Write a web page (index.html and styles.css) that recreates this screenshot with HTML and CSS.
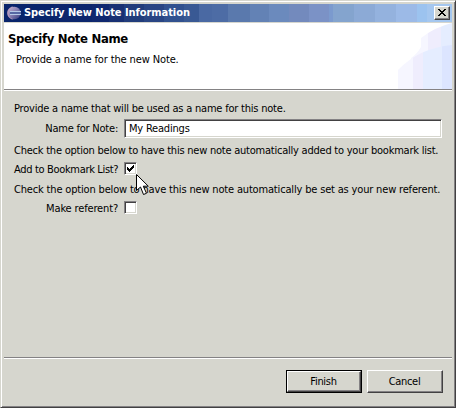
FILE: index.html
```html
<!DOCTYPE html>
<html lang="en">
<head>
<meta charset="utf-8">
<title>Specify New Note Information</title>
<link rel="stylesheet" href="styles.css">
</head>
<body>
<div class="window">
  <header class="titlebar">
    <svg class="logo" width="16" height="16" viewBox="0 0 16 16">
      <defs><linearGradient id="orb" x1="0" y1="0" x2="1" y2="1"><stop offset="0" stop-color="#c5b2ce"/><stop offset=".45" stop-color="#8982b4"/><stop offset="1" stop-color="#30377c"/></linearGradient></defs>
      <path d="M6 1.5C-.5 4 -.5 12 6 14.5L8 14C3 11 3 5 8 2Z" fill="#b99abb"/>
      <circle cx="8.5" cy="8" r="6.2" fill="url(#orb)"/>
      <path d="M4 6.5H15M4 9.5H15" stroke="#b5c8e6"/>
      <path d="M4 7.5H15M4 8.5H15" stroke="#5668a4"/>
    </svg>
    <span class="caption">Specify New Note Information</span>
    <button class="close" aria-label="Close"><svg width="8" height="7" viewBox="0 0 8 7" shape-rendering="crispEdges"><path d="M0 0h2v1h1v1h2V1h1V0h2v1H7v1H6v1H5v1h1v1h1v1h1v1H6V6H5V5H3v1H2v1H0V6h1V5h1V4h1V3H2V2H1V1H0z"/></svg></button>
  </header>
  <section class="banner">
    <div class="banner-text"><h1>Specify Note Name</h1><p>Provide a name for the new Note.</p></div>
    <svg class="art" width="56" height="66" viewBox="0 0 56 66">
      <defs>
        <clipPath id="upper"><path d="M25 15Q39 4 56 0V66H15V35Q21 31 25 24Z"/></clipPath>
        <clipPath id="lower"><path d="M2 47Q23 25 56 22V66H2Z"/></clipPath>
      </defs>
      <g clip-path="url(#upper)"><path fill="#f6f6ff" d="M0 0h32v66H0z"/><path fill="#efedfd" d="M32 0h13v66H32z"/><path fill="#e5edff" d="M45 0h11v66H45z"/></g>
      <g clip-path="url(#lower)"><path fill="#f6f6ff" d="M0 0h17v66H0z"/><path fill="#efedfd" d="M17 0h10v66H17z"/><path fill="#e5edff" d="M27 0h19v66H27z"/><path fill="#dce5ff" d="M46 0h10v66H46z"/></g>
    </svg>
  </section>
  <main class="form">
    <p class="line one">Provide a name that will be used as a name for this note.</p>
    <div class="row name"><label for="n"><span class="t-name">Name for Note:</span></label><div class="field" id="n"><span>My Readings</span></div></div>
    <p class="line two">Check the option below to have this new note automatically added to your bookmark list.</p>
    <div class="row mark"><label><span class="t-add">Add to Bookmark List?</span></label>
      <div class="check"><svg width="7" height="7" viewBox="0 0 7 7" shape-rendering="crispEdges"><path d="M0 2h1v1h1v1h1V3h1V2h1V1h1V0h1v3H6v1H5v1H4v1H3v1H2V6H1V5H0z"/></svg></div>
      <svg class="pointer" width="13" height="22" viewBox="0 0 13 22"><path d="M.5.5V16.5L4.5 13L7.5 20.5L10.5 19.3L7.3 12.2H12.3Z" fill="#fff" stroke="#000"/></svg>
    </div>
    <p class="line three">Check the option below to have this new note automatically be set as your new referent.</p>
    <div class="row ref"><label><span class="t-ref">Make referent?</span></label><div class="check"></div></div>
  </main>
  <footer class="actions">
    <button class="btn default"><span class="face"><span class="t-fin">Finish</span></span></button>
    <button class="btn"><span class="t-can">Cancel</span></button>
  </footer>
</div>
</body>
</html>
```

FILE: styles.css
```css
* { box-sizing: border-box; }
body { margin: 0; background: #d6d6ce; }
.window {
  width: 456px; height: 408px; display: flex; flex-direction: column;
  background: #d6d6ce; color: #000;
  font: 11px/14px "DejaVu Sans Condensed", "DejaVu Sans", sans-serif; font-stretch: condensed;
  border: 1px solid; border-color: #d6d6ce #424142 #424142 #d6d6ce;
  box-shadow: inset 1px 1px #fff, inset -1px -1px #848284;
  padding: 3px 3px 2px 3px;
  white-space: nowrap;
}
.titlebar {
  height: 18px; flex: none; display: flex; align-items: center; padding: 0 2px;
  background: linear-gradient(90deg, #08246b 0 50px, #0c266d 50px 88px, #10286f 88px 105px, #183073 105px 120px, #213c7b 120px 140px, #294584 140px 160px, #31518f 160px 180px, #395994 180px 195px, #4a69a3 195px 208px, #4d6ca5 208px 224px, #5a79ad 224px 246px, #6382b5 246px 265px, #6b8abd 265px 285px, #738abd 285px 305px, #7b92c6 305px 325px, #7b9ace 325px 329px, #84a4ce 329px 350px, #8caad6 350px 371px, #94b2de 371px 392px, #9cbae7 392px 413px, #9cc3ef 413px 423px, #a5c7ef 423px);
}
.logo { flex: none; margin-right: 2px; }
.caption { color: #fff; font-weight: bold; flex: 1; letter-spacing: -.06px; }
.close {
  width: 16px; height: 14px; padding: 0 1px 1px 0; display: flex; align-items: center; justify-content: center;
  background: #d6d6ce; border: 1px solid; border-color: #fff #424142 #424142 #fff; box-shadow: inset -1px -1px #848284;
}
.banner {
  height: 68px; flex: none; margin-top: 1px; display: flex; justify-content: space-between;
  background: #fff; border-bottom: 1px solid #fff; box-shadow: inset 0 -1px #848284;
}
.banner-text { padding: 8px 0 0 4px; }
h1 { margin: 0; font-size: 13px; line-height: 16px; letter-spacing: -.34px; }
.banner p { margin: 6px 0 0 8px; letter-spacing: -.12px; }
.form { flex: 1; padding: 10px 10px 0 10px; }
.line { margin: 0; height: 14px; padding-top: 1px; }
.one { letter-spacing: -.21px; }
.two { letter-spacing: -.23px; }
.three { letter-spacing: -.17px; }
.row { display: flex; align-items: flex-start; position: relative; }
.row label { width: 104px; flex: none; text-align: right; margin-right: 6px; padding-top: 1px; }
.t-name { letter-spacing: -.22px; }
.t-ref { letter-spacing: -.15px; }
.t-add { letter-spacing: -.33px; }
.name { height: 20px; margin: 4px 0 4px; }
.name label { padding-top: 3px; }
.field {
  width: 318px; height: 19px; padding: 2px 4px; background: #fff; letter-spacing: -.2px;
  border: 1px solid; border-color: #848284 #fff #fff #848284;
  box-shadow: inset 1px 1px #424142, inset -1px -1px #d6d6ce;
}
.mark, .ref { height: 14px; margin: 5px 0 6px; }
.check {
  width: 13px; height: 13px; padding: 2px; background: #fff;
  border: 1px solid; border-color: #848284 #fff #fff #848284;
  box-shadow: inset 1px 1px #424142, inset -1px -1px #d6d6ce;
}
.check svg { display: block; }
.pointer { position: absolute; left: 122px; top: 12px; }
.actions {
  height: 48px; flex: none; display: flex; justify-content: flex-end; gap: 5px; padding: 12px 9px 0 0;
  border-top: 1px solid #848284; box-shadow: inset 0 1px #fff;
}
.btn {
  width: 76px; height: 23px; padding: 1px 1px 0 0; font: inherit; color: #000; background: #d6d6ce;
  border: 1px solid; border-color: #fff #424142 #424142 #fff; box-shadow: inset -1px -1px #848284;
}
.t-fin, .t-can { letter-spacing: -.3px; }
.default { border-color: #000; padding: 0; box-shadow: none; }
.face {
  display: flex; width: 74px; height: 21px; padding: 1px 1px 0 0; align-items: center; justify-content: center;
  border: 1px solid; border-color: #fff #424142 #424142 #fff; box-shadow: inset -1px -1px #848284;
}
```
